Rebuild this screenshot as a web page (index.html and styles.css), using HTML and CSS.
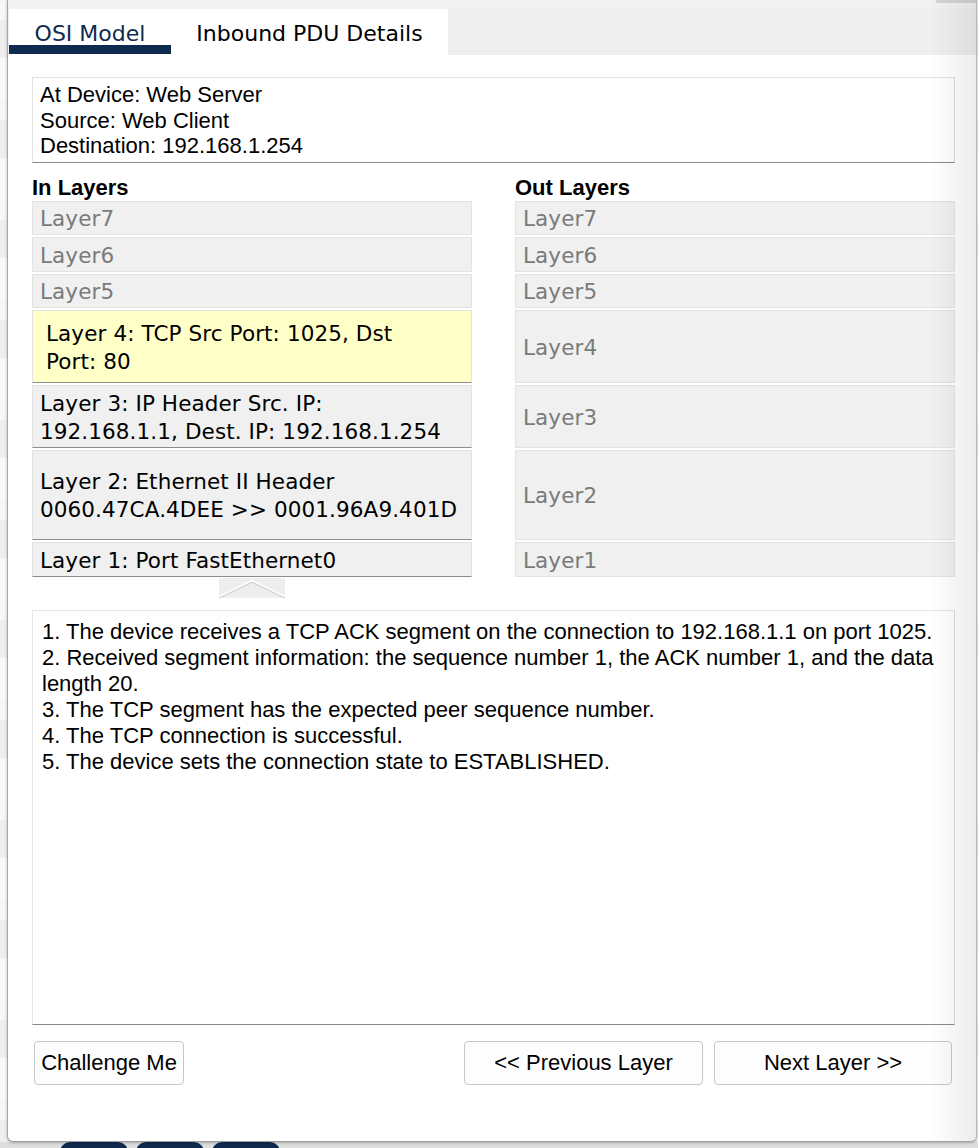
FILE: index.html
```html
<!DOCTYPE html>
<html>
<head>
<meta charset="utf-8">
<title>PDU Information</title>
<link rel="stylesheet" href="styles.css">
</head>
<body>
<div class="dialog">
  <div class="topstrip"><div class="topbar"></div></div>
  <div class="tabs">
    <div class="tab active">OSI Model</div>
    <div class="tab">Inbound PDU Details</div>
  </div>
  <div class="content">
    <div class="info">At Device: Web Server<br>Source: Web Client<br>Destination: 192.168.1.254</div>
    <div class="layers">
      <div class="head">In Layers</div>
      <div class="head">Out Layers</div>

      <div class="cell dim">Layer7</div>
      <div class="cell dim">Layer7</div>

      <div class="cell dim">Layer6</div>
      <div class="cell dim">Layer6</div>

      <div class="cell dim">Layer5</div>
      <div class="cell dim">Layer5</div>

      <div class="cell sel dark">Layer 4: TCP Src Port: 1025, Dst<br>Port: 80</div>
      <div class="cell dim">Layer4</div>

      <div class="cell dark">Layer 3: IP Header Src. IP:<br>192.168.1.1, Dest. IP: 192.168.1.254</div>
      <div class="cell dim">Layer3</div>

      <div class="cell dark">Layer 2: Ethernet II Header<br>0060.47CA.4DEE &gt;&gt; 0001.96A9.401D</div>
      <div class="cell dim">Layer2</div>

      <div class="cell dark">Layer 1: Port FastEthernet0</div>
      <div class="cell dim">Layer1</div>
    </div>
    <div class="arrow-row">
      <div class="up">
        <svg width="66" height="20" viewBox="0 0 66 20">
          <polyline points="0,20 33,4 66,20" fill="none" stroke="#d2d2d2" stroke-width="1.5"/>
          <polyline points="0,18.5 33,2.5 66,18.5" fill="none" stroke="#ffffff" stroke-width="1.5"/>
        </svg>
      </div>
    </div>
    <div class="desc">1. The device receives a TCP ACK segment on the connection to 192.168.1.1 on port 1025.<br>2. Received segment information: the sequence number 1, the ACK number 1, and the data<br>length 20.<br>3. The TCP segment has the expected peer sequence number.<br>4. The TCP connection is successful.<br>5. The device sets the connection state to ESTABLISHED.</div>
    <div class="buttons">
      <button class="btn challenge">Challenge Me</button>
      <div class="nav">
        <button class="btn prev">&lt;&lt; Previous Layer</button>
        <button class="btn next">Next Layer &gt;&gt;</button>
      </div>
    </div>
  </div>
</div>
<div class="footer">
  <span class="chip"></span><span class="chip"></span><span class="chip"></span>
</div>
</body>
</html>
```
FILE: styles.css
```css
html, body {
  margin: 0;
  padding: 0;
}
body {
  width: 978px;
  height: 1148px;
  overflow: hidden;
  font-family: "Liberation Sans", Arial, sans-serif;
  background: repeating-linear-gradient(to bottom, #f7f7f7 0 20px, #eeeeee 20px 58px, #f9f9f9 58px 100px);
}
.dialog {
  position: relative;
  margin-left: 7px;
  width: 970px;
  height: 1142px;
  box-sizing: border-box;
  border-left: 1px solid #a6a6a6;
  border-right: 1px solid #b8b8b8;
  border-bottom: 1px solid #a0a0a0;
  border-radius: 0 0 6px 6px;
  background: #ffffff;
  box-shadow: 0 1px 3px rgba(0,0,0,0.25);
  overflow: hidden;
}
.dialog::after {
  content: "";
  position: absolute;
  top: 0;
  right: 0;
  bottom: 0;
  width: 46px;
  background: linear-gradient(to right, rgba(0,0,0,0), rgba(0,0,0,0.075));
  pointer-events: none;
}
.topstrip {
  height: 9px;
  background: #f2f2f2;
  display: flex;
  justify-content: flex-end;
}
.topbar {
  width: 40px;
  height: 3px;
  background: #d4d4d4;
}
.tabs {
  height: 46px;
  background: #efefef;
  display: flex;
  padding-left: 1px;
}
.tab {
  box-sizing: border-box;
  height: 46px;
  padding-top: 12px;
  background: #ffffff;
  font-family: "DejaVu Sans", Verdana, sans-serif;
  font-size: 22px;
  line-height: 26px;
  color: #000;
  text-align: center;
}
.tab.active {
  width: 162px;
  color: #0f2a4f;
  background: linear-gradient(to top, #ffffff 0 1px, #0f2a4f 1px 10px, #ffffff 10px);
}
.tab:not(.active) {
  width: 277px;
}
.content {
  padding: 22px 21px 0 24px;
}
.info {
  box-sizing: border-box;
  height: 86px;
  border: 1px solid #e3e3e3;
  border-bottom-color: #8a8a8a;
  border-right-color: #d9d9d9;
  padding: 4px 7px;
  font-size: 22px;
  line-height: 25.5px;
  color: #000;
}
.layers {
  margin-top: 13px;
  display: grid;
  grid-template-columns: 440px 440px;
  grid-template-rows: 23px 34px 35px 34px 73px 63px 90px 35px;
  column-gap: 43px;
  row-gap: 2px;
}
.head {
  font-size: 22px;
  font-weight: bold;
  line-height: 23px;
  color: #000;
}
.cell {
  box-sizing: border-box;
  display: flex;
  align-items: center;
  padding: 2px 7px 0;
  border: 1px solid #e3e3e3;
  background: #f0f0f0;
  font-family: "DejaVu Sans", Verdana, sans-serif;
  font-size: 21.5px;
  line-height: 28px;
  letter-spacing: 0.1px;
  white-space: nowrap;
}
.cell.dim {
  color: #7a7a7a;
}
.cell.dark {
  color: #000;
  border-bottom-color: #8c8c8c;
}
.cell.sel {
  background: #ffffc8;
  padding-left: 13px;
}
.arrow-row {
  width: 440px;
  display: flex;
  justify-content: center;
  margin-top: 1px;
}
.up {
  width: 66px;
  height: 20px;
  background: #eeeeee;
}
.up svg {
  display: block;
}
.desc {
  box-sizing: border-box;
  margin-top: 12px;
  height: 415px;
  border: 1px solid #e6e6e6;
  border-bottom-color: #8a8a8a;
  border-right-color: #dadada;
  padding: 8px 9px;
  font-size: 22px;
  line-height: 26px;
  color: #000;
  white-space: nowrap;
}
.buttons {
  margin-top: 16px;
  display: flex;
  justify-content: space-between;
  padding: 0 3px 0 2px;
}
.nav {
  display: flex;
  gap: 11px;
}
.btn {
  box-sizing: border-box;
  height: 44px;
  border: 1px solid #c6c6c6;
  border-radius: 4px;
  background: #fdfdfd;
  font-family: "Liberation Sans", Arial, sans-serif;
  font-size: 22px;
  color: #000;
  padding: 0;
  margin: 0;
}
.challenge {
  width: 150px;
}
.prev {
  width: 239px;
}
.next {
  width: 238px;
}
.footer {
  height: 6px;
  overflow: hidden;
  background: #dedede;
  display: flex;
  gap: 8px;
  padding-left: 60px;
}
.chip {
  display: block;
  width: 68px;
  height: 20px;
  border-radius: 10px;
  background: #0f2a4f;
}
```
